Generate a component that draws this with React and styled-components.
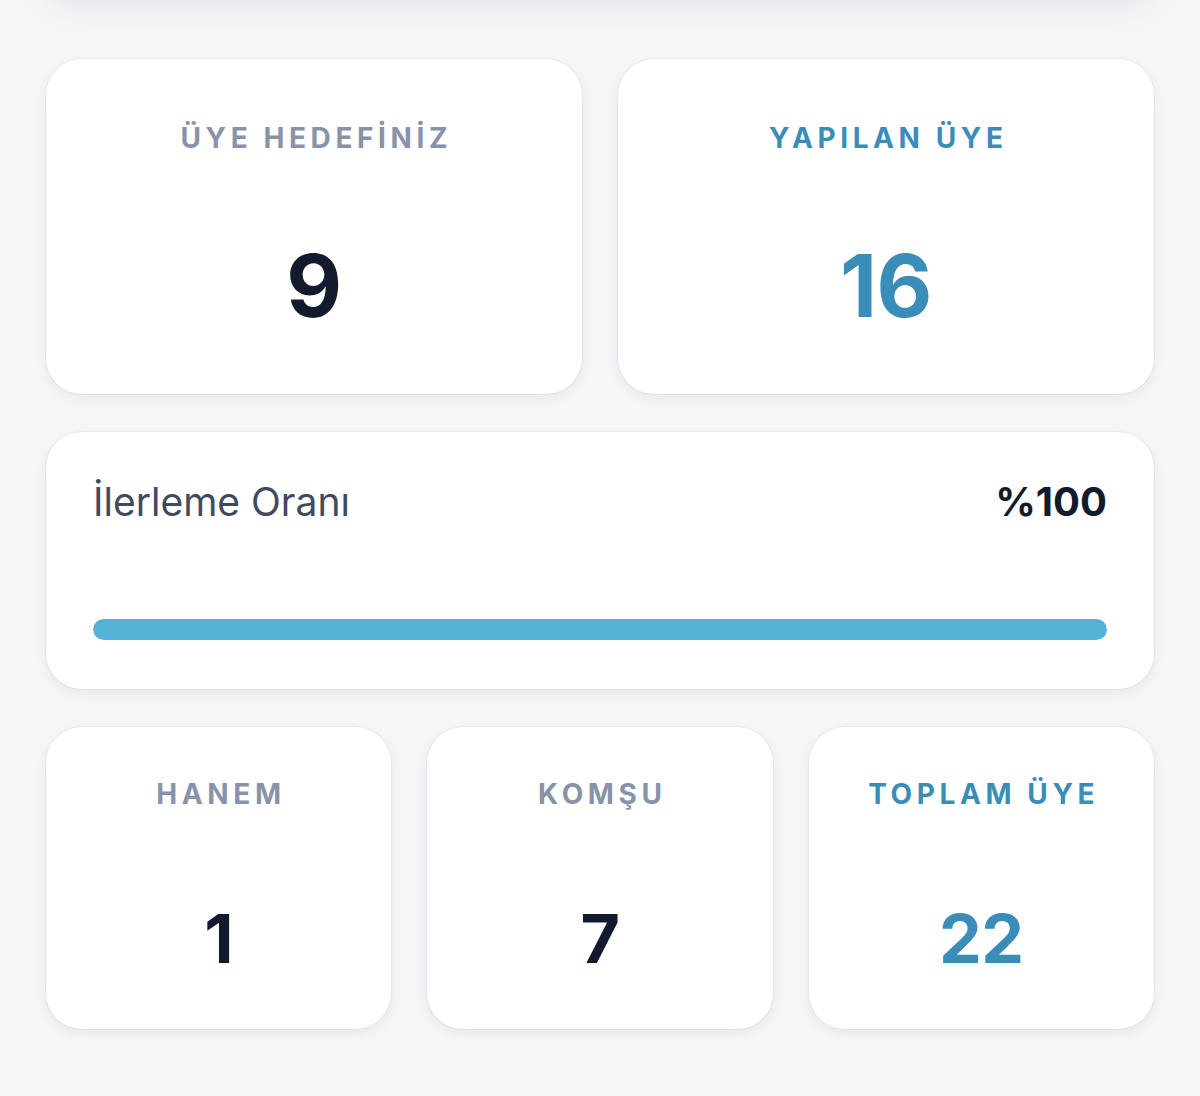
import React from "react";
import styled, { createGlobalStyle } from "styled-components";

const GlobalStyle = createGlobalStyle`
  html, body {
    margin: 0;
    padding: 0;
    background: #f5f6f8;
    font-family: Inter, "Noto Sans", "Liberation Sans", sans-serif;
    -webkit-font-smoothing: antialiased;
  }
  * { box-sizing: border-box; }
`;

const Page = styled.div`
  min-height: 1096px;
  padding: 0 46px 40px;
  overflow: hidden;
  display: flex;
  flex-direction: column;
  gap: 38px;
`;

const HeaderTail = styled.div`
  height: 60px;
  margin-top: -72px;
  margin-bottom: 33px;
  border-radius: 36px;
  background: #ffffff;
  box-shadow: 0 12px 40px rgba(15, 23, 42, 0.1);
`;

const Grid = styled.div`
  display: grid;
  grid-template-columns: repeat(${(p) => p.$cols}, 1fr);
  gap: 36px;
`;

const Card = styled.div`
  background: #ffffff;
  border-radius: 36px;
  box-shadow: 0 0 0 1px rgba(15, 23, 42, 0.035), 0 4px 12px rgba(15, 23, 42, 0.07);
`;

const StatCard = styled(Card)`
  display: flex;
  flex-direction: column;
  align-items: center;
  padding: ${(p) => (p.$small ? "53px 16px 57px" : "65px 16px 65px")};
  gap: ${(p) => (p.$small ? "96px" : "91px")};
`;

const StatLabel = styled.div`
  font-size: 28px;
  line-height: 1;
  font-weight: 700;
  letter-spacing: 4.6px;
  padding-left: 4.6px;
  color: ${(p) => (p.$accent ? "#3a8db8" : "#8893ab")};
  white-space: nowrap;
`;

const StatValue = styled.div`
  font-size: ${(p) => (p.$small ? "68px" : "86px")};
  line-height: 1;
  font-weight: 700;
  letter-spacing: -0.5px;
  color: ${(p) => (p.$accent ? "#3a8db8" : "#131a2e")};
`;

const ProgressCard = styled(Card)`
  padding: 50px 47px 49px;
  display: flex;
  flex-direction: column;
  gap: 97px;
`;

const ProgressHead = styled.div`
  display: flex;
  justify-content: space-between;
  align-items: baseline;
`;

const ProgressTitle = styled.div`
  font-size: 39px;
  line-height: 1;
  font-weight: 400;
  color: #3f4a5f;
`;

const ProgressValue = styled.div`
  font-size: 40px;
  line-height: 1;
  font-weight: 700;
  color: #131a2e;
`;

const Track = styled.div`
  height: 21px;
  border-radius: 11px;
  background: #e6eaf0;
  overflow: hidden;
`;

const Fill = styled.div`
  height: 100%;
  border-radius: 11px;
  background: #53b2d5;
`;

const top = [
  { label: "ÜYE HEDEFİNİZ", value: "9", accent: false },
  { label: "YAPILAN ÜYE", value: "16", accent: true },
];

const bottom = [
  { label: "HANEM", value: "1", accent: false },
  { label: "KOMŞU", value: "7", accent: false },
  { label: "TOPLAM ÜYE", value: "22", accent: true },
];

export default function App() {
  const percent = 100;
  return (
    <>
      <GlobalStyle />
      <Page>
        <HeaderTail />
        <Grid $cols={2}>
          {top.map((s) => (
            <StatCard key={s.label}>
              <StatLabel $accent={s.accent}>{s.label}</StatLabel>
              <StatValue $accent={s.accent}>{s.value}</StatValue>
            </StatCard>
          ))}
        </Grid>
        <ProgressCard>
          <ProgressHead>
            <ProgressTitle>İlerleme Oranı</ProgressTitle>
            <ProgressValue>%{percent}</ProgressValue>
          </ProgressHead>
          <Track>
            <Fill style={{ width: `${Math.min(percent, 100)}%` }} />
          </Track>
        </ProgressCard>
        <Grid $cols={3}>
          {bottom.map((s) => (
            <StatCard key={s.label} $small>
              <StatLabel $accent={s.accent}>{s.label}</StatLabel>
              <StatValue $small $accent={s.accent}>{s.value}</StatValue>
            </StatCard>
          ))}
        </Grid>
      </Page>
    </>
  );
}
